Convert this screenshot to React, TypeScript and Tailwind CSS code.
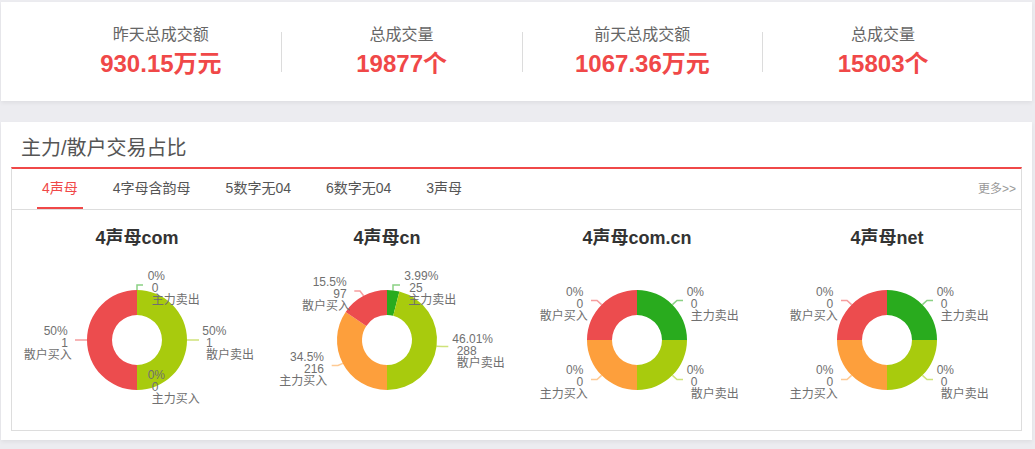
import React from "react";

const RED = "#ec4c4e";
const LIME = "#a8cb0d";
const GREEN = "#29ab1e";
const ORANGE = "#fd9f3c";

type Label = {
  lines: [string, string, string];
  x: [number, number, number];
  y: number; // first baseline
  anchor: "start" | "end";
};

type Slice = {
  color: string;
  from: number;
  to: number;
  leader?: string;
  label: Label;
};

type Chart = { title: string; slices: Slice[] };

const stats = [
  { label: "昨天总成交额", value: "930.15万元" },
  { label: "总成交量", value: "19877个" },
  { label: "前天总成交额", value: "1067.36万元" },
  { label: "总成交量", value: "15803个" },
];

const tabs = ["4声母", "4字母含韵母", "5数字无04", "6数字无04", "3声母"];

function quarterChart(title: string): Chart {
  return {
    title,
    slices: [
      {
        color: GREEN,
        from: 0,
        to: 90,
        leader: "M160.4 38.6 L165 34.5 L171 34.5",
        label: { lines: ["0%", "0", "主力卖出"], x: [174.7, 178.7, 178.7], y: 30, anchor: "start" },
      },
      {
        color: LIME,
        from: 90,
        to: 180,
        leader: "M160.4 109.4 L165 113.5 L171 113.5",
        label: { lines: ["0%", "0", "散户卖出"], x: [174.7, 178.7, 178.7], y: 108.3, anchor: "start" },
      },
      {
        color: ORANGE,
        from: 180,
        to: 270,
        leader: "M89.6 109.4 L85 113.5 L79 113.5",
        label: { lines: ["0%", "0", "主力买入"], x: [71.3, 71.3, 75.7], y: 108.3, anchor: "end" },
      },
      {
        color: RED,
        from: 270,
        to: 360,
        leader: "M89.6 38.6 L85 34.5 L79 34.5",
        label: { lines: ["0%", "0", "散户买入"], x: [71.3, 71.3, 75.7], y: 30, anchor: "end" },
      },
    ],
  };
}

const charts: Chart[] = [
  {
    title: "4声母com",
    slices: [
      {
        color: GREEN,
        from: 0,
        to: 0,
        leader: "M125 24 L125 19 L131 19",
        label: { lines: ["0%", "0", "主力卖出"], x: [135.7, 139.7, 139.7], y: 14, anchor: "start" },
      },
      {
        color: LIME,
        from: 0,
        to: 180,
        leader: "M175 74 L187 74",
        label: { lines: ["50%", "1", "散户卖出"], x: [190.3, 194, 194], y: 69.3, anchor: "start" },
      },
      {
        color: ORANGE,
        from: 180,
        to: 180,
        label: { lines: ["0%", "0", "主力买入"], x: [135.7, 139.7, 139.7], y: 113.3, anchor: "start" },
      },
      {
        color: RED,
        from: 180,
        to: 360,
        leader: "M63 74 L75 74",
        label: { lines: ["50%", "1", "散户买入"], x: [55.7, 56, 59.7], y: 69.3, anchor: "end" },
      },
    ],
  },
  {
    title: "4声母cn",
    slices: [
      {
        color: GREEN,
        from: 0,
        to: 14.36,
        leader: "M131 24.4 L131 19 L138 19",
        label: { lines: ["3.99%", "25", "主力卖出"], x: [142.3, 147.3, 146.3], y: 14, anchor: "start" },
      },
      {
        color: LIME,
        from: 14.36,
        to: 180,
        leader: "M174.6 80.3 L180 80.6 L186.3 80.6",
        label: { lines: ["46.01%", "288", "散户卖出"], x: [190.3, 194.7, 194.7], y: 76.6, anchor: "start" },
      },
      {
        color: ORANGE,
        from: 180,
        to: 304.2,
        leader: "M80.8 97.4 L76 99.5 L69.7 99.5",
        label: { lines: ["34.5%", "216", "主力买入"], x: [62, 62, 65.3], y: 95, anchor: "end" },
      },
      {
        color: RED,
        from: 304.2,
        to: 360,
        leader: "M101.6 29.8 L98 25 L92.3 25",
        label: { lines: ["15.5%", "97", "散户买入"], x: [84.7, 84.7, 88], y: 20, anchor: "end" },
      },
    ],
  },
  quarterChart("4声母com.cn"),
  quarterChart("4声母net"),
];

function pt(cx: number, cy: number, r: number, deg: number) {
  const a = (deg * Math.PI) / 180;
  return [cx + r * Math.sin(a), cy - r * Math.cos(a)];
}

function ring(cx: number, cy: number, r0: number, r1: number, a0: number, a1: number) {
  if (a1 - a0 >= 360) a1 = a0 + 359.99;
  const large = a1 - a0 > 180 ? 1 : 0;
  const [x1, y1] = pt(cx, cy, r1, a0);
  const [x2, y2] = pt(cx, cy, r1, a1);
  const [x3, y3] = pt(cx, cy, r0, a1);
  const [x4, y4] = pt(cx, cy, r0, a0);
  return `M${x1} ${y1} A${r1} ${r1} 0 ${large} 1 ${x2} ${y2} L${x3} ${y3} A${r0} ${r0} 0 ${large} 0 ${x4} ${y4} Z`;
}

function Donut({ chart }: { chart: Chart }) {
  return (
    <div className="flex flex-col">
      <div className="flex h-[56px] items-center justify-center text-[18px] font-bold text-[#333]">
        {chart.title}
      </div>
      <svg width={250} height={164} viewBox="0 0 250 164" className="overflow-visible">
        {chart.slices
          .filter((s) => s.to > s.from)
          .map((s, i) => (
            <path key={i} d={ring(125, 74, 25, 50, s.from, s.to)} fill={s.color} />
          ))}
        {chart.slices.map((s, i) =>
          s.leader ? (
            <path key={"l" + i} d={s.leader} fill="none" stroke={s.color} strokeOpacity={0.55} strokeWidth={1.5} />
          ) : null
        )}
        {chart.slices.map((s, i) => (
          <text
            key={"t" + i}
            fontSize={12}
            fill="#707070"
            fontFamily='"Liberation Sans", "Noto Sans CJK SC", sans-serif'
            textAnchor={s.label.anchor}
          >
            {s.label.lines.map((line, j) => (
              <tspan key={j} x={s.label.x[j]} y={s.label.y + j * 12}>
                {line}
              </tspan>
            ))}
          </text>
        ))}
      </svg>
    </div>
  );
}

export default function App() {
  return (
    <div
      className="min-h-screen bg-[#ececf0] pl-[1px] pr-[3px] pt-[2px]"
      style={{ fontFamily: '"Liberation Sans", "Noto Sans CJK SC", sans-serif' }}
    >
      <div className="flex h-[99px] items-center bg-white pl-[40px] pr-[29px] shadow-[0_2px_4px_rgba(0,0,0,0.06)]">
        {stats.map((s, i) => (
          <React.Fragment key={i}>
            {i > 0 && <div className="h-[40px] w-px bg-[#dcdcdc]" />}
            <div className="flex flex-1 flex-col items-center">
              <div className="text-[16px] leading-[20px] text-[#666]">{s.label}</div>
              <div className="mt-[4px] text-[24px] font-bold leading-[30px] text-[#f04848]">{s.value}</div>
            </div>
          </React.Fragment>
        ))}
      </div>

      <div className="mt-[21px] bg-white pb-[9px] shadow-[0_2px_4px_rgba(0,0,0,0.06)]">
        <div className="pb-[8px] pl-[20px] pt-[15px] text-[20px] leading-[22px] text-[#555]">
          主力/散户交易占比
        </div>
        <div className="mx-[10px] border border-t-2 border-[#dddddd] border-t-[#f04848]">
          <div className="flex h-[41px] items-stretch border-b border-[#dddddd] pl-[25px] pr-[5px]">
            <div className="flex gap-[25px]">
              {tabs.map((t, i) => (
                <div
                  key={t}
                  className={`flex items-center border-b-2 px-[5px] pt-[1px] text-[14px] ${
                    i === 0 ? "border-[#f04848] text-[#f04848]" : "border-transparent text-[#555]"
                  }`}
                >
                  {t}
                </div>
              ))}
            </div>
            <div className="ml-auto flex items-center text-[12px] text-[#999]">更多&gt;&gt;</div>
          </div>
          <div className="grid h-[220px] w-[1000px] grid-cols-4">
            {charts.map((c) => (
              <Donut key={c.title} chart={c} />
            ))}
          </div>
        </div>
      </div>
    </div>
  );
}
